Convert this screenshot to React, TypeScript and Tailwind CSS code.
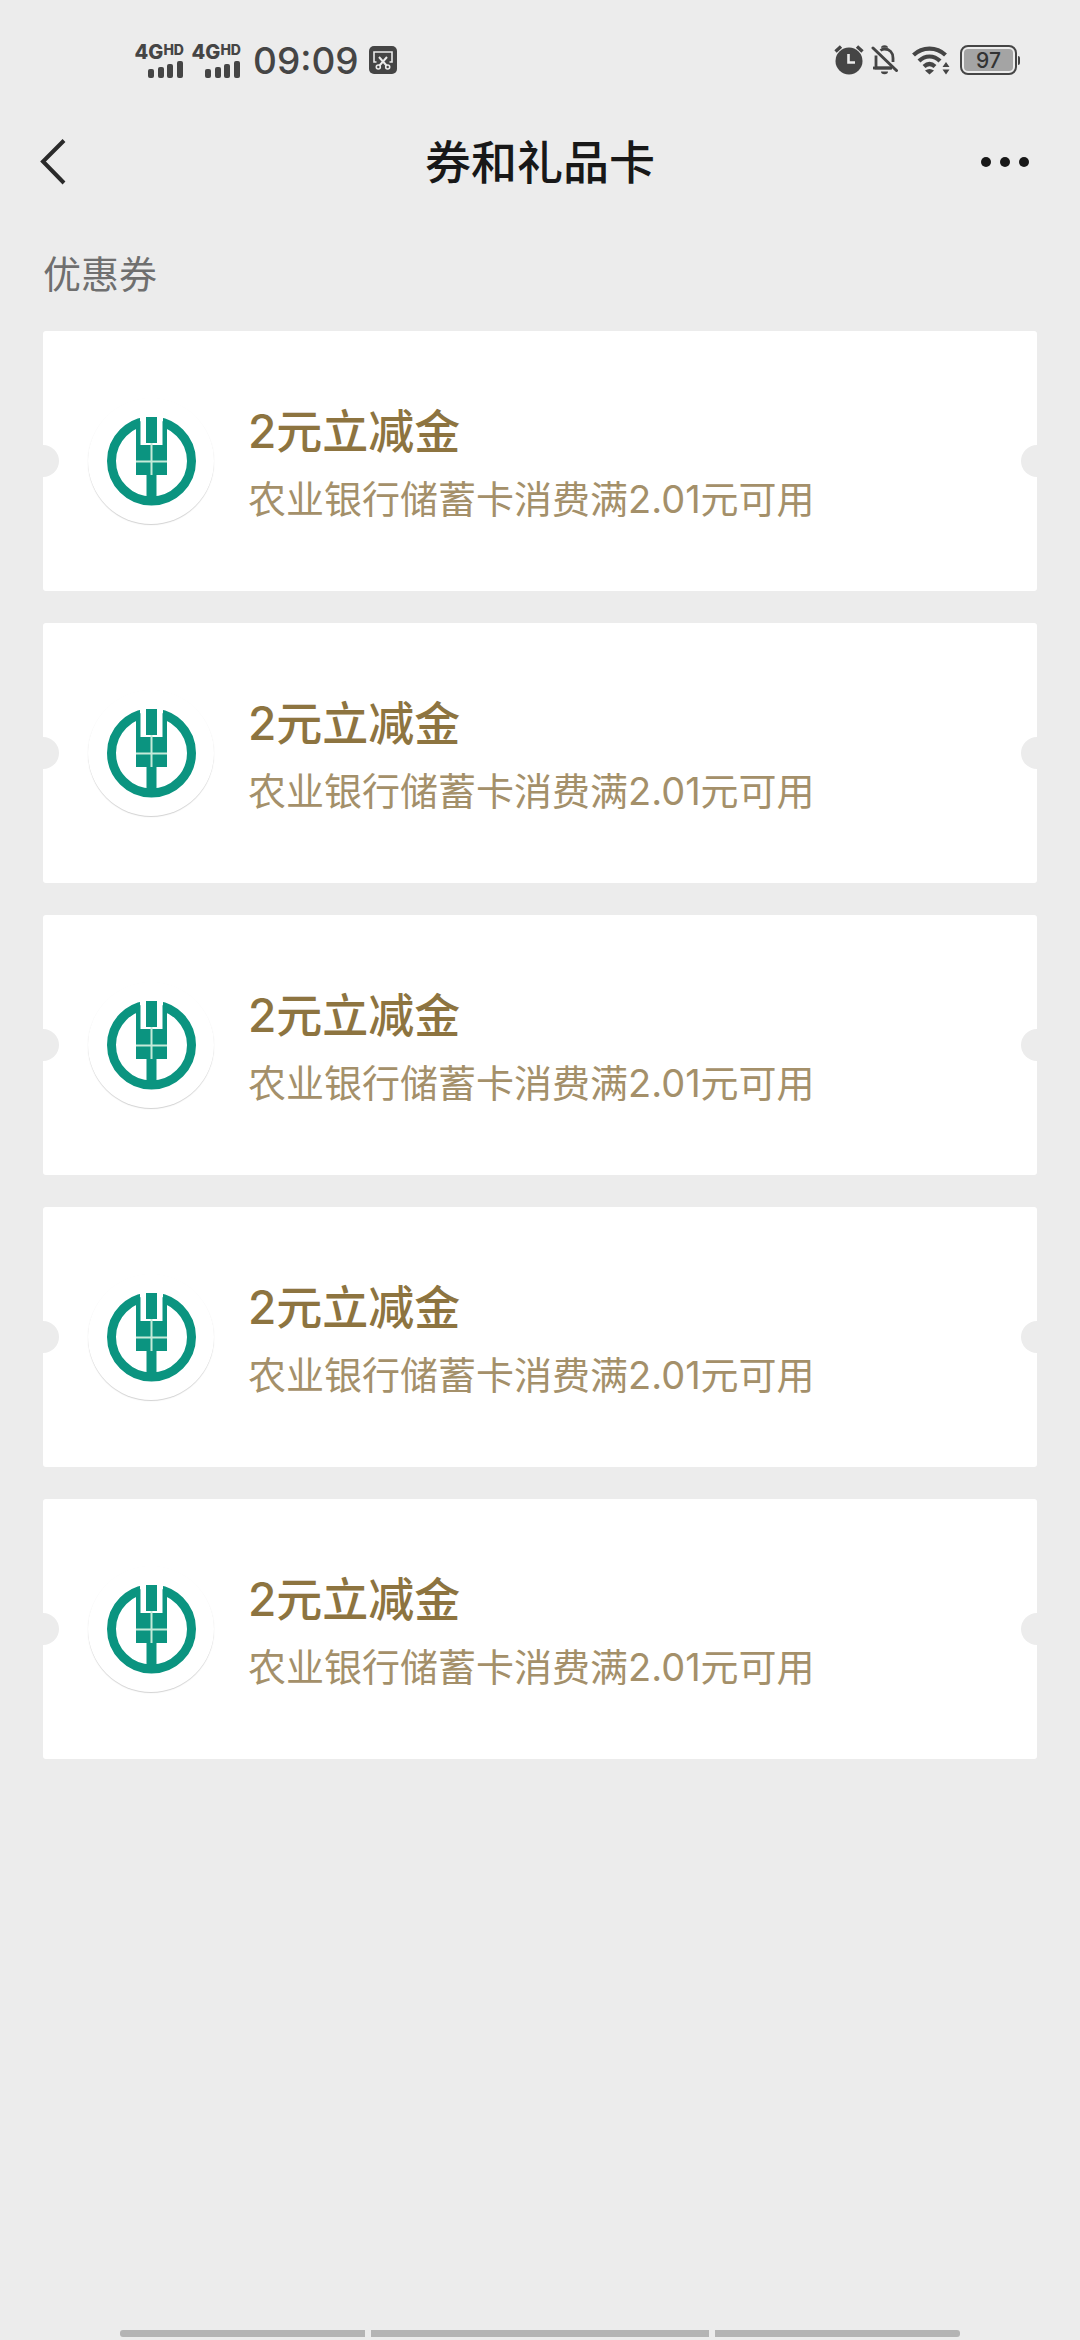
import React from 'react';

interface Coupon {
  id: number;
  title: string;
  description: string;
}

const COUPONS: Coupon[] = [
  { id: 1, title: '2元立减金', description: '农业银行储蓄卡消费满2.01元可用' },
  { id: 2, title: '2元立减金', description: '农业银行储蓄卡消费满2.01元可用' },
  { id: 3, title: '2元立减金', description: '农业银行储蓄卡消费满2.01元可用' },
  { id: 4, title: '2元立减金', description: '农业银行储蓄卡消费满2.01元可用' },
  { id: 5, title: '2元立减金', description: '农业银行储蓄卡消费满2.01元可用' },
];

function Signal() {
  return (
    <div className="flex w-[48px] flex-col items-end">
      <div className="flex items-start font-extrabold">
        <span className="text-[20px] leading-[18px]">4G</span>
        <span className="text-[14px] leading-[14px]">HD</span>
      </div>
      <svg className="h-[17px] w-[36px]" viewBox="0 0 36 17" fill="currentColor" aria-hidden="true">
        <rect x="0" y="8" width="6" height="9" rx="2" />
        <rect x="10" y="6" width="6" height="11" rx="2" />
        <rect x="19" y="3" width="6" height="14" rx="2" />
        <rect x="29" y="0" width="6" height="17" rx="2" />
      </svg>
    </div>
  );
}

function ScreenshotIcon() {
  return (
    <svg className="size-7" viewBox="0 0 28 28" fill="none" aria-hidden="true">
      <rect width="28" height="28" rx="5" fill="#454545" />
      <g stroke="#ececec" strokeWidth="1.6">
        <path d="M7.5 16H5V6h18v10h-2.5" />
        <path d="M10 11l7.500 8.500M18 11l-7.500 8.500" strokeWidth="2" />
        <circle cx="9.300" cy="21" r="2" />
        <circle cx="18.700" cy="21" r="2" />
      </g>
    </svg>
  );
}

function AlarmIcon() {
  return (
    <svg className="h-[30px] w-[30px]" viewBox="0 0 30 30" aria-hidden="true">
      <circle cx="15" cy="16" r="13.500" fill="#454545" />
      <path d="M1.500 6.500L7 1.500M28.500 6.500L23 1.500" stroke="#454545" strokeWidth="3.400" />
      <path d="M14.500 9v8.500H21" stroke="#ececec" strokeWidth="2.600" fill="none" />
    </svg>
  );
}

function MutedBellIcon() {
  return (
    <svg className="h-[30px] w-[28px]" viewBox="0 0 28 30" fill="none" aria-hidden="true">
      <path d="M5 10.500V23h15.500M9.500 5.500C11 4.300 12 4 13.500 4c5 0 8.500 3.500 8.500 9v4" stroke="#454545" strokeWidth="2.800" />
      <path d="M2 23h19" stroke="#454545" strokeWidth="2.800" />
      <path d="M10 2.800a3.500 2.500 0 0 1 7 0zM10 26.500h7a3.500 2.800 0 0 1-7 0z" fill="#454545" />
      <path d="M2 3l23.500 22.500" stroke="#454545" strokeWidth="3" strokeLinecap="round" />
    </svg>
  );
}

function WifiIcon() {
  return (
    <svg className="h-[30px] w-[38px]" viewBox="0 0 38 30" fill="none" aria-hidden="true">
      <g stroke="#454545" strokeWidth="4.200">
        <path d="M1.500 10C10.500 1.500 24.500 1.500 33.500 10" />
        <path d="M7 16c6-6 15-6 21 0" />
        <path d="M12 21.500c3.500-3.200 7.500-3.200 11 0" />
      </g>
      <path d="M13 25.500q4.500-3 9 0L17.500 29.500z" fill="#454545" />
      <path d="M30.500 22L34 17l3.500 5zM30.500 24.500L34 29.500l3.500-5z" fill="#454545" />
    </svg>
  );
}

function Battery() {
  return (
    <div className="flex items-center">
      <div className="h-[30px] w-[57px] rounded-[8px] border-2 border-[#454545] p-[2px]">
        <div className="flex h-full items-center justify-center rounded-[4px] bg-[#a4a4a4] text-[21px] leading-none font-medium text-[#333333]">
          97
        </div>
      </div>
      <div className="ml-px h-[9px] w-[2px] rounded-r bg-[#454545]" />
    </div>
  );
}

function StatusBar() {
  return (
    <div className="flex h-[120px] items-center justify-between pr-[60px] pl-[136px] text-[#454545]">
      <div className="flex items-center">
        <Signal />
        <div className="ml-[9px]">
          <Signal />
        </div>
        <span className="ml-3 text-[37px] leading-none font-medium">09:09</span>
        <div className="ml-[10px]">
          <ScreenshotIcon />
        </div>
      </div>
      <div className="flex items-center">
        <AlarmIcon />
        <div className="ml-[7px]">
          <MutedBellIcon />
        </div>
        <div className="ml-[13px]">
          <WifiIcon />
        </div>
        <div className="ml-[10px]">
          <Battery />
        </div>
      </div>
    </div>
  );
}

// Agricultural Bank of China emblem
function BankLogo() {
  return (
    <svg className="size-[89px]" viewBox="0 0 89 89" aria-hidden="true">
      <circle cx="44.500" cy="44" r="40" fill="none" stroke="#0b9480" strokeWidth="9" />
      <rect x="33" y="-1" width="23" height="29" fill="#fff" />
      <path d="M29 8l4.500-4V28h22V4l4.500 4v50H49.500v26h-10V58H29z" fill="#0b9480" />
      <rect x="39" y="0" width="11" height="26" fill="#0b9480" />
      <path d="M44.500 26v32M29 44.500h31" stroke="#c5ead9" strokeWidth="2" />
    </svg>
  );
}

function CouponCard({ coupon }: { coupon: Coupon }) {
  return (
    <button
      type="button"
      className="relative flex h-[260px] w-full items-center overflow-hidden rounded-[3px] bg-white pl-[45px] text-left"
    >
      {/* Ticket notches */}
      <span className="absolute top-[114px] -left-4 size-8 rounded-full bg-[#ececec]" />
      <span className="absolute top-[114px] -right-4 size-8 rounded-full bg-[#ececec]" />

      <span className="flex size-[126px] shrink-0 items-center justify-center rounded-full shadow-[0_1px_1px_rgba(0,0,0,0.18)]">
        <BankLogo />
      </span>
      <span className="ml-[34px] flex flex-col">
        <span className="text-[46px] leading-[76px] font-medium text-[#8d7440]">{coupon.title}</span>
        <span className="text-[38px] leading-[60px] text-[#a4906a]">{coupon.description}</span>
      </span>
    </button>
  );
}

export default function App() {
  return (
    <div
      lang="zh-CN"
      className="flex min-h-screen flex-col bg-[#ececec] font-['Inter','Noto_Sans_CJK_SC',sans-serif]"
    >
      <StatusBar />

      <header className="flex h-[84px] items-center justify-between px-[40px]">
        <button type="button" aria-label="返回" className="flex w-[60px] justify-start">
          <svg className="h-[48px] w-[26px]" viewBox="0 0 26 48" fill="none" aria-hidden="true">
            <path d="M24 2.500L3 23.500L24 45" stroke="#2a2a2a" strokeWidth="4" />
          </svg>
        </button>
        <h1 className="text-[46px] leading-[64px] font-medium text-[#181818]">券和礼品卡</h1>
        <button type="button" aria-label="更多" className="flex w-[60px] justify-start">
          <svg className="h-[10px] w-[50px]" viewBox="0 0 50 10" fill="#181818" aria-hidden="true">
            <circle cx="6" cy="5" r="5" />
            <circle cx="25" cy="5" r="5" />
            <circle cx="44" cy="5" r="5" />
          </svg>
        </button>
      </header>

      <main className="flex-1 px-[43px] pt-12">
        <h2 className="text-[38px] leading-[44px] text-[#6f6f6f]">优惠券</h2>
        <ul className="mt-[35px] flex flex-col gap-8">
          {COUPONS.map((coupon) => (
            <li key={coupon.id}>
              <CouponCard coupon={coupon} />
            </li>
          ))}
        </ul>
      </main>

      {/* Gesture bar */}
      <div className="flex gap-[6px] px-[120px] pb-[3px]">
        <div className="h-[7px] flex-[245] rounded-l-[3px] bg-[#b4b4b4]" />
        <div className="h-[7px] flex-[338] bg-[#b4b4b4]" />
        <div className="h-[7px] flex-[245] rounded-r-[3px] bg-[#b4b4b4]" />
      </div>
    </div>
  );
}
